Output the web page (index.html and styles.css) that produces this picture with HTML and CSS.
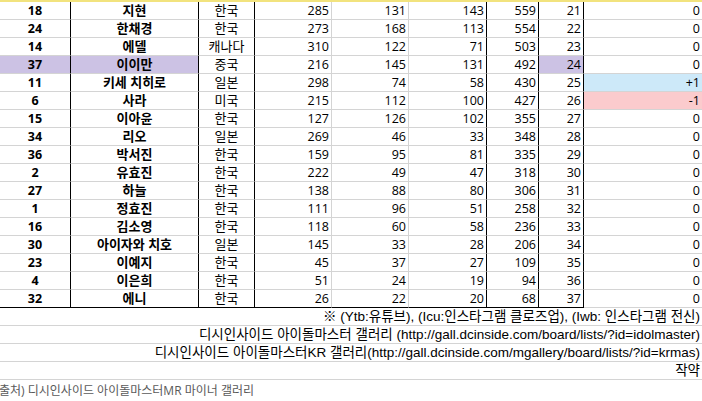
FILE: index.html
```html
<!DOCTYPE html>
<html lang="ko">
<head>
<meta charset="utf-8">
<link rel="stylesheet" href="styles.css">
</head>
<body>
<div class="sheet">
  <div class="topbar"></div>
  <div class="grid">
    <div class="c c1 b">18</div><div class="c c2 b">지현</div><div class="c c3">한국</div><div class="c n g">285</div><div class="c n g">131</div><div class="c n k">143</div><div class="c n k">559</div><div class="c n k">21</div><div class="c n g">0</div>
    <div class="c c1 b">24</div><div class="c c2 b">한채경</div><div class="c c3">한국</div><div class="c n g">273</div><div class="c n g">168</div><div class="c n k">113</div><div class="c n k">554</div><div class="c n k">22</div><div class="c n g">0</div>
    <div class="c c1 b">14</div><div class="c c2 b">에델</div><div class="c c3">캐나다</div><div class="c n g">310</div><div class="c n g">122</div><div class="c n k">71</div><div class="c n k">503</div><div class="c n k">23</div><div class="c n g">0</div>
    <div class="c c1 b hl">37</div><div class="c c2 b hl">이이만</div><div class="c c3">중국</div><div class="c n g">216</div><div class="c n g">145</div><div class="c n k">131</div><div class="c n k">492</div><div class="c n k hl">24</div><div class="c n g">0</div>
    <div class="c c1 b">11</div><div class="c c2 b">키세 치히로</div><div class="c c3">일본</div><div class="c n g">298</div><div class="c n g">74</div><div class="c n k">58</div><div class="c n k">430</div><div class="c n k">25</div><div class="c n g up">+1</div>
    <div class="c c1 b">6</div><div class="c c2 b">사라</div><div class="c c3">미국</div><div class="c n g">215</div><div class="c n g">112</div><div class="c n k">100</div><div class="c n k">427</div><div class="c n k">26</div><div class="c n g down">-1</div>
    <div class="c c1 b">15</div><div class="c c2 b">이아윤</div><div class="c c3">한국</div><div class="c n g">127</div><div class="c n g">126</div><div class="c n k">102</div><div class="c n k">355</div><div class="c n k">27</div><div class="c n g">0</div>
    <div class="c c1 b">34</div><div class="c c2 b">리오</div><div class="c c3">일본</div><div class="c n g">269</div><div class="c n g">46</div><div class="c n k">33</div><div class="c n k">348</div><div class="c n k">28</div><div class="c n g">0</div>
    <div class="c c1 b">36</div><div class="c c2 b">박서진</div><div class="c c3">한국</div><div class="c n g">159</div><div class="c n g">95</div><div class="c n k">81</div><div class="c n k">335</div><div class="c n k">29</div><div class="c n g">0</div>
    <div class="c c1 b">2</div><div class="c c2 b">유효진</div><div class="c c3">한국</div><div class="c n g">222</div><div class="c n g">49</div><div class="c n k">47</div><div class="c n k">318</div><div class="c n k">30</div><div class="c n g">0</div>
    <div class="c c1 b">27</div><div class="c c2 b">하늘</div><div class="c c3">한국</div><div class="c n g">138</div><div class="c n g">88</div><div class="c n k">80</div><div class="c n k">306</div><div class="c n k">31</div><div class="c n g">0</div>
    <div class="c c1 b">1</div><div class="c c2 b">정효진</div><div class="c c3">한국</div><div class="c n g">111</div><div class="c n g">96</div><div class="c n k">51</div><div class="c n k">258</div><div class="c n k">32</div><div class="c n g">0</div>
    <div class="c c1 b">16</div><div class="c c2 b">김소영</div><div class="c c3">한국</div><div class="c n g">118</div><div class="c n g">60</div><div class="c n k">58</div><div class="c n k">236</div><div class="c n k">33</div><div class="c n g">0</div>
    <div class="c c1 b">30</div><div class="c c2 b">아이자와 치호</div><div class="c c3">일본</div><div class="c n g">145</div><div class="c n g">33</div><div class="c n k">28</div><div class="c n k">206</div><div class="c n k">34</div><div class="c n g">0</div>
    <div class="c c1 b">23</div><div class="c c2 b">이예지</div><div class="c c3">한국</div><div class="c n g">45</div><div class="c n g">37</div><div class="c n k">27</div><div class="c n k">109</div><div class="c n k">35</div><div class="c n g">0</div>
    <div class="c c1 b">4</div><div class="c c2 b">이은희</div><div class="c c3">한국</div><div class="c n g">51</div><div class="c n g">24</div><div class="c n k">19</div><div class="c n k">94</div><div class="c n k">36</div><div class="c n g">0</div>
    <div class="c c1 b last">32</div><div class="c c2 b last">에니</div><div class="c c3 last">한국</div><div class="c n g last">26</div><div class="c n g last">22</div><div class="c n k last">20</div><div class="c n k last">68</div><div class="c n k last">37</div><div class="c n g">0</div>
  </div>
  <div class="notes">
    <div class="note">※ (Ytb:유튜브), (Icu:인스타그램 클로즈업), (Iwb: 인스타그램 전신)</div>
    <div class="note">디시인사이드 아이돌마스터 갤러리 (http://gall.dcinside.com/board/lists/?id=idolmaster)</div>
    <div class="note">디시인사이드 아이돌마스터KR 갤러리(http://gall.dcinside.com/mgallery/board/lists/?id=krmas)</div>
    <div class="note">작약</div>
  </div>
  <p class="source">출처) 디시인사이드 아이돌마스터MR 마이너 갤러리</p>
</div>
</body>
</html>
```
FILE: styles.css
```css
html, body {
  margin: 0;
  padding: 0;
  background: #ffffff;
}
body {
  width: 702px;
  height: 401px;
  overflow: hidden;
  font-family: "Open Sans", "Noto Sans CJK KR", sans-serif;
  font-size: 13px;
  color: #000;
}
.sheet {
  width: 702px;
}
.topbar {
  height: 2px;
  background: #f2e37e;
}
.grid {
  display: grid;
  grid-template-columns: 71px 128px 56px 77px 77px 78px 52px 45px 119px;
  width: 703px;
}
.c {
  box-sizing: border-box;
  height: 18px;
  line-height: 17px;
  border-bottom: 1px solid #d4d4d4;
  white-space: nowrap;
  overflow: hidden;
}
.c1, .c2 {
  text-align: center;
  border-right: 1px solid #000;
}
.c1 {
  font-size: 12.5px;
}
.c3 {
  text-align: center;
  border-right: 1px solid #000;
}
.b {
  font-weight: 700;
}
.n {
  text-align: right;
  padding-right: 2px;
  font-size: 12.5px;
}
.g {
  border-right: 1px solid #d4d4d4;
}
.k {
  border-right: 1px solid #000;
}
.last {
  border-bottom: 1px solid #000;
}
.hl {
  background: #ccc2e4;
}
.up {
  background: #cde9f9;
}
.down {
  background: #fbcbcd;
}
.notes {
  display: flex;
  flex-direction: column;
  font-family: "Liberation Sans", "Noto Sans CJK KR", sans-serif;
  font-size: 13.5px;
}
.note {
  box-sizing: border-box;
  height: 18px;
  line-height: 17px;
  border-bottom: 1px solid #d4d4d4;
  text-align: right;
  padding-right: 2px;
  white-space: nowrap;
}
.source {
  margin: 0 0 0 -1px;
  height: 22px;
  line-height: 22px;
  font-size: 12px;
  color: #595959;
  white-space: nowrap;
}
```
